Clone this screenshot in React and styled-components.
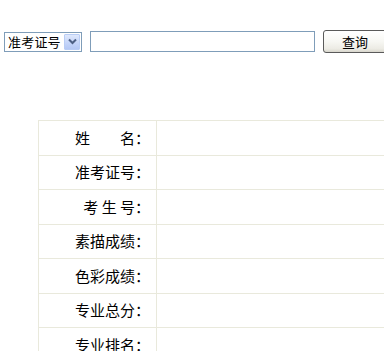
import React from "react";
import styled, { createGlobalStyle } from "styled-components";

const GlobalStyle = createGlobalStyle`
  html, body {
    margin: 0;
    padding: 0;
    background: #fff;
    overflow: hidden;
  }
  body {
    font-family: "Noto Sans CJK SC", "Liberation Sans", sans-serif;
    color: #000;
  }
`;

const SearchBar = styled.div`
  display: flex;
  align-items: center;
  gap: 8px;
  padding: 30px 0 0 4px;
  height: 23px;
  width: 500px;
  & > * {
    flex-shrink: 0;
  }
`;

const FakeSelect = styled.div`
  box-sizing: border-box;
  width: 78px;
  height: 20px;
  border: 1px solid #7f9db9;
  display: flex;
  align-items: center;
  justify-content: space-between;
  padding: 1px;
  background: #fff;
  font-size: 13px;
  line-height: 16px;
`;

const SelectText = styled.span`
  padding-left: 2px;
  letter-spacing: 0.2px;
`;

const ArrowBox = styled.span`
  box-sizing: border-box;
  width: 16px;
  height: 16px;
  border: 1px solid #b9cdf5;
  border-radius: 1px;
  background: linear-gradient(180deg, #dfe8fc 0%, #c3d4f9 60%, #b4c8f5 100%);
  display: flex;
  align-items: center;
  justify-content: center;
`;

const TextInput = styled.input`
  box-sizing: border-box;
  width: 225px;
  height: 21px;
  border: 1px solid #7f9db9;
  padding: 0 3px;
  margin: 0;
  outline: none;
  font: inherit;
`;

const QueryButton = styled.button`
  box-sizing: border-box;
  width: 64px;
  height: 23px;
  border: 1px solid #5a5a5a;
  border-radius: 3px;
  background: linear-gradient(180deg, #ffffff 0%, #f7f7f3 50%, #ecebe4 85%, #d8d6cc 100%);
  font-family: "Noto Sans CJK SC", sans-serif;
  font-size: 13px;
  line-height: 18px;
  padding: 0;
  color: #000;
`;

const ResultTable = styled.table`
  margin: 67px 0 0 38px;
  width: 520px;
  border-collapse: collapse;
  font-size: 15px;
`;

const Row = styled.tr`
  height: 34.5px;
`;

const LabelCell = styled.td`
  box-sizing: border-box;
  width: 118px;
  border: 1px solid #e9e9dc;
  text-align: right;
  padding: 0 6px 0 0;
  white-space: pre;
  vertical-align: middle;
  line-height: 18px;
`;

const ValueCell = styled.td`
  border: 1px solid #e9e9dc;
  padding: 0;
`;

const labels = [
  "姓\u3000\u3000名：",
  "准考证号：",
  "考 生 号：",
  "素描成绩：",
  "色彩成绩：",
  "专业总分：",
  "专业排名：",
];

export default function App() {
  return (
    <>
      <GlobalStyle />
      <SearchBar>
        <FakeSelect>
          <SelectText>准考证号</SelectText>
          <ArrowBox>
            <svg width="9" height="7" viewBox="0 0 9 7">
              <path d="M1 1.5 L4.5 5 L8 1.5" fill="none" stroke="#4d6185" strokeWidth="2" />
            </svg>
          </ArrowBox>
        </FakeSelect>
        <TextInput type="text" />
        <QueryButton>查询</QueryButton>
      </SearchBar>
      <ResultTable>
        <tbody>
          {labels.map((l) => (
            <Row key={l}>
              <LabelCell>{l}</LabelCell>
              <ValueCell />
            </Row>
          ))}
        </tbody>
      </ResultTable>
    </>
  );
}
